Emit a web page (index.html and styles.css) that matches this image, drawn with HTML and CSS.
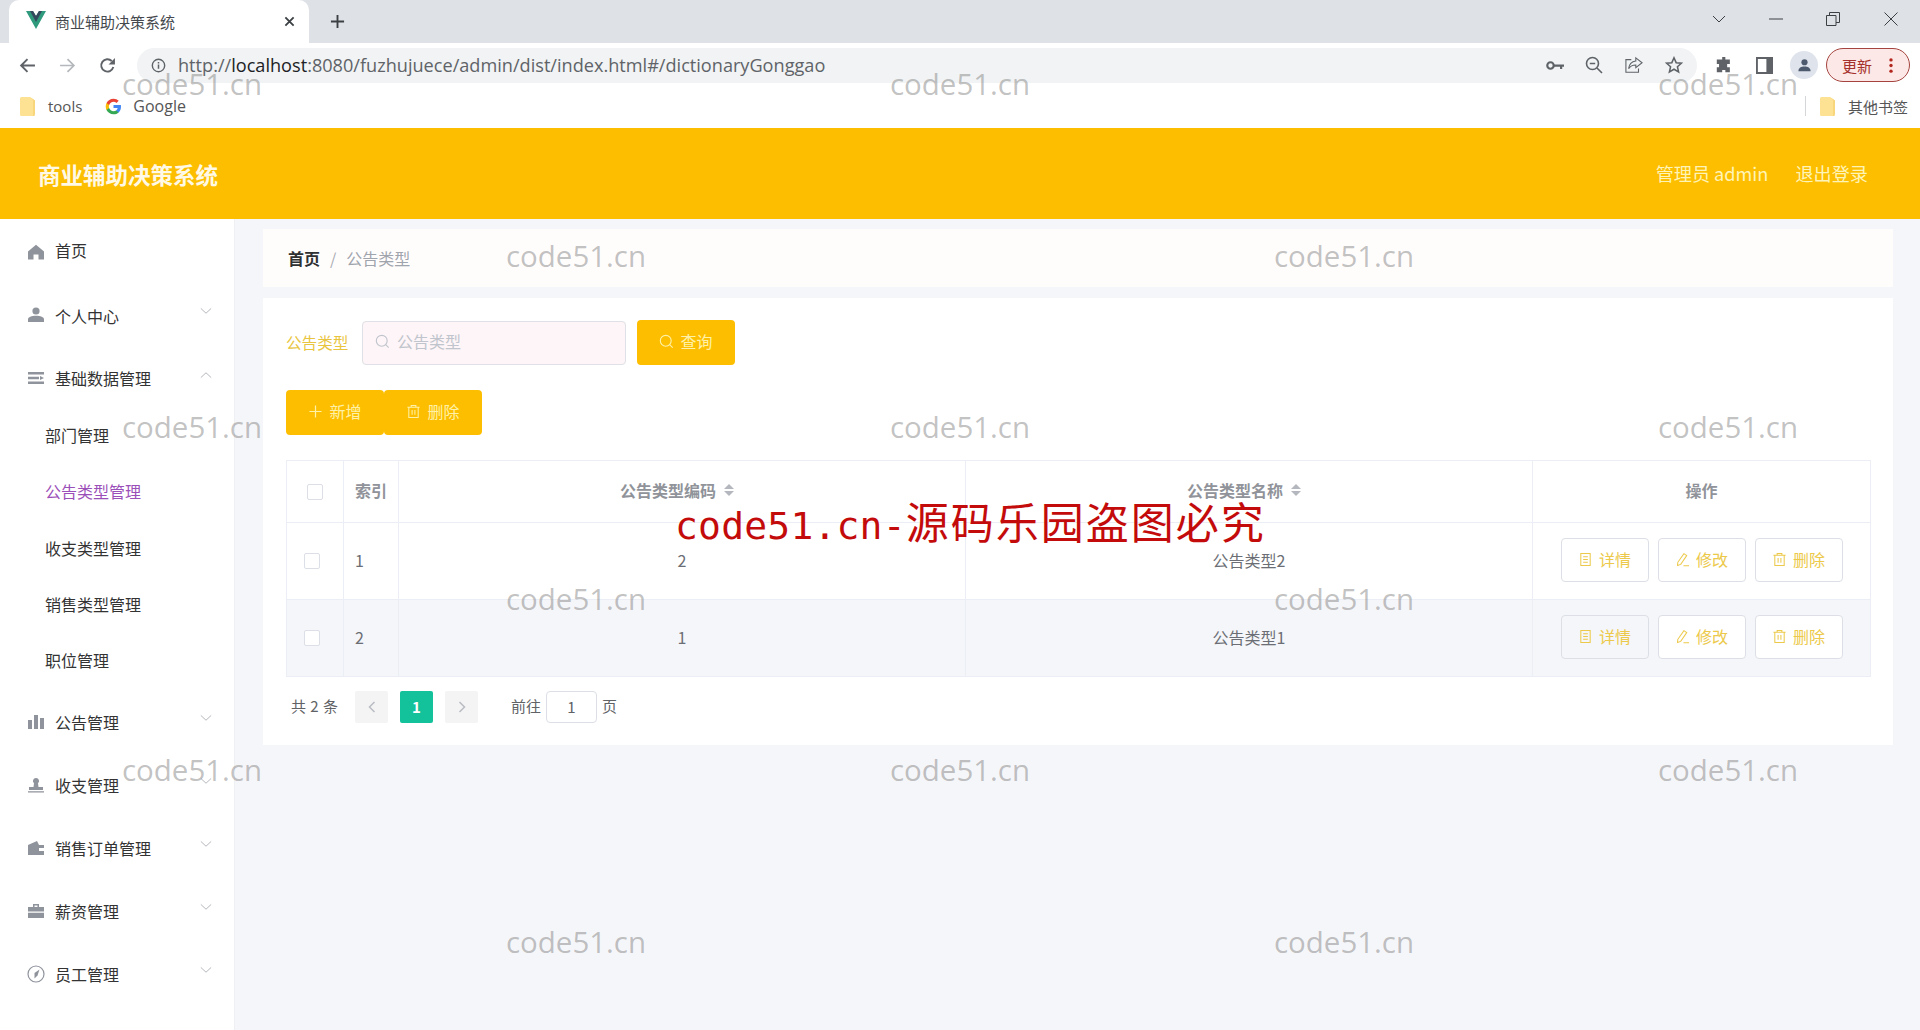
FILE: index.html
```html
<!DOCTYPE html>
<html lang="zh-CN">
  <head>
    <meta charset="UTF-8" />
    <meta name="viewport" content="width=device-width, initial-scale=1.0" />
    <title>商业辅助决策系统</title>
    <link rel="stylesheet" href="styles.css">
  </head>
  <body>
    <svg class="sprite" xmlns="http://www.w3.org/2000/svg">
      <symbol id="i-search" viewBox="0 0 16 16"><circle cx="7.2" cy="7.2" r="5.8" fill="none" stroke="currentColor" stroke-width="1.2"/><path d="M11.4 11.4l3.2 3.2" stroke="currentColor" stroke-width="1.2"/></symbol>
      <symbol id="i-trash" viewBox="0 0 16 16"><path d="M1.5 3.5h13M5.5 3.5V1.5h5v2M3 3.5v11h10v-11M6.5 6.5v5M9.5 6.5v5" fill="none" stroke="currentColor" stroke-width="1.1"/></symbol>
      <symbol id="i-doc" viewBox="0 0 16 16"><path d="M3 1.5h10v13H3zM5.5 5h5M5.5 8h5M5.5 11h5" fill="none" stroke="currentColor" stroke-width="1.1"/></symbol>
      <symbol id="i-edit" viewBox="0 0 16 16"><path d="M9.5 1.8l3 2-6.4 9.4-3.4 1.2.3-3.4zM9 14.6h6" fill="none" stroke="currentColor" stroke-width="1.1"/></symbol>
      <symbol id="i-down" viewBox="0 0 14 8"><path d="M1 1l6 5.6L13 1" fill="none" stroke="currentColor" stroke-width="1"/></symbol>
      <symbol id="i-folder" viewBox="0 0 16 19"><path d="M1.5 0h8.5l5 3.5v14a1.5 1.5 0 0 1-1.5 1.5h-12A1.5 1.5 0 0 1 0 17.500V1.500A1.500 1.500 0 0 1 1.500 0z" fill="#fde293"/><path d="M10 0l5 3.500V17l-1 2h-1V3z" fill="#f8d67c"/></symbol>
    </svg>

    <div class="browser">
      <div class="tabstrip">
        <div class="tab">
          <svg class="tab-icon" viewBox="0 0 20 20"><path d="M0 1h7l3 5 3-5h7L10 19z" fill="#2f9a7c"/><path d="M4 1h3l3 5 3-5h3L10 12z" fill="#35495e"/></svg>
          <span class="tab-title">商业辅助决策系统</span>
          <svg class="tab-close" viewBox="0 0 12 12"><path d="M1.500 1.500l9 9M10.500 1.500l-9 9" stroke="#3c4043" stroke-width="2"/></svg>
        </div>
        <svg class="tab-new" viewBox="0 0 16 16"><path d="M8 1v14M1 8h14" stroke="#3c4043" stroke-width="2"/></svg>
        <div class="window-controls">
          <svg viewBox="0 0 14 8" class="win-chevron"><path d="M1 1l6 6 6-6" fill="none" stroke="#3c4043"/></svg>
          <svg viewBox="0 0 14 14" class="win-min"><path d="M0 7h14" stroke="#3c4043"/></svg>
          <svg viewBox="0 0 14 14" class="win-max"><path d="M.5 3.500h9.500v10H.5zM3.500 3.500V.5h10v10H10" fill="none" stroke="#3c4043"/></svg>
          <svg viewBox="0 0 14 14" class="win-close"><path d="M.5.5l13 13M13.500.5l-13 13" stroke="#3c4043"/></svg>
        </div>
      </div>

      <div class="toolbar">
        <svg class="tool-icon back" viewBox="0 0 16 16"><path d="M15 8H2M8 2L2 8l6 6" fill="none" stroke="#5f6368" stroke-width="1.800"/></svg>
        <svg class="tool-icon forward" viewBox="0 0 16 16"><path d="M1 8h13M8 2l6 6-6 6" fill="none" stroke="#b4b7bb" stroke-width="1.600"/></svg>
        <svg class="tool-icon reload" viewBox="0 0 16 16"><path d="M13.500 9.500A5.800 5.800 0 1 1 12 3.800" fill="none" stroke="#5f6368" stroke-width="1.800"/><path d="M15 1v6H9z" fill="#5f6368"/></svg>
        <div class="omnibox">
          <svg class="omni-info" viewBox="0 0 16 16"><circle cx="8" cy="8" r="6.600" fill="none" stroke="#5f6368" stroke-width="1.500"/><path d="M8 7v4.500M8 4.200v1.600" stroke="#5f6368" stroke-width="1.600"/></svg>
          <span class="url">http://<b>localhost</b>:8080/fuzhujuece/admin/dist/index.html#/dictionaryGonggao</span>
          <svg class="omni-icon key" viewBox="0 0 20 12"><circle cx="5" cy="6" r="3.600" fill="none" stroke="#5f6368" stroke-width="2.400"/><path d="M8 4.800h12v2.600h-2v2.400h-2.400V7.400H8z" fill="#5f6368"/></svg>
          <svg class="omni-icon zoom" viewBox="0 0 18 18"><circle cx="7.500" cy="7.500" r="6" fill="none" stroke="#5f6368" stroke-width="1.600"/><path d="M4.800 7.500h5.400M12 12l5 5" stroke="#5f6368" stroke-width="1.600"/></svg>
          <svg class="omni-icon share" viewBox="0 0 20 18"><path d="M7 3H1v14h14v-4" fill="none" stroke="#5f6368" stroke-width="1.200"/><path d="M12 1l7 5.500-7 5.500V9C8 9 6 10 4 13c.6-5 3.500-8 8-8.500z" fill="none" stroke="#5f6368" stroke-width="1.200"/></svg>
          <svg class="omni-icon star" viewBox="0 0 20 20"><path d="M10 2l2.400 5.400 5.800.6-4.400 3.900 1.300 5.800L10 14.700l-5.100 3 1.300-5.800L1.800 8l5.800-.6z" fill="none" stroke="#5f6368" stroke-width="1.700"/></svg>
        </div>
        <svg class="tool-icon puzzle" viewBox="0 0 20 20"><path d="M8 1h3.500v3h5v5h-3v3.500h3V18h-5v-2.500H8V18H2v-5.500h2.500V9H2V4h6z" fill="#5f6368"/></svg>
        <svg class="tool-icon sidepanel" viewBox="0 0 18 18"><path d="M1 1h16v16H1z" fill="none" stroke="#5f6368" stroke-width="2"/><path d="M11 1h6v16h-6z" fill="#5f6368"/></svg>
        <span class="avatar"><svg viewBox="0 0 16 16"><circle cx="8" cy="4.500" r="3.300" fill="#4d5a6d"/><path d="M1.500 14c0-3.500 3-5 6.500-5s6.500 1.500 6.500 5z" fill="#4d5a6d"/></svg></span>
        <span class="update-btn">更新<svg class="update-dots" viewBox="0 0 4 16"><circle cx="2" cy="2" r="1.800"/><circle cx="2" cy="8" r="1.800"/><circle cx="2" cy="14" r="1.800"/></svg></span>
      </div>

      <div class="bookmarks">
        <svg class="bm-folder"><use href="#i-folder"/></svg>
        <span class="bm-text bm-tools">tools</span>
        <svg class="bm-google" viewBox="0 0 24 24">
          <path d="M22.560 12.250c0-.78-.07-1.530-.2-2.250H12v4.260h5.920c-.26 1.370-1.040 2.530-2.210 3.310v2.770h3.570c2.080-1.920 3.280-4.740 3.280-8.090z" fill="#4285f4"/>
          <path d="M12 23c2.970 0 5.460-.98 7.280-2.660l-3.570-2.770c-.98.66-2.230 1.060-3.710 1.060-2.860 0-5.290-1.930-6.160-4.530H2.180v2.840C3.990 20.530 7.700 23 12 23z" fill="#34a853"/>
          <path d="M5.840 14.090c-.22-.66-.35-1.360-.35-2.090s.13-1.430.35-2.090V7.070H2.180C1.430 8.550 1 10.220 1 12s.43 3.450 1.180 4.930l3.660-2.840z" fill="#fbbc05"/>
          <path d="M12 5.380c1.620 0 3.060.56 4.210 1.640l3.150-3.150C17.450 2.090 14.970 1 12 1 7.700 1 3.990 3.470 2.180 7.070l3.660 2.840c.87-2.600 3.300-4.530 6.160-4.530z" fill="#ea4335"/>
        </svg>
        <span class="bm-text bm-google-text">Google</span>
        <span class="bm-divider"></span>
        <svg class="bm-folder"><use href="#i-folder"/></svg>
        <span class="bm-text bm-other">其他书签</span>
      </div>
    </div>

    <header class="app-header">
      <h1 class="app-title">商业辅助决策系统</h1>
      <div class="app-user">
        <span>管理员 admin</span>
        <span>退出登录</span>
      </div>
    </header>

    <div class="layout">
      <aside class="sidebar">
        <div class="nav-item">
          <svg class="nav-icon" viewBox="0 0 16 16"><path d="M8 .8L16 7.500V15.500H10.500V10.500H5.500V15.500H0V7.500z"/></svg>
          <span>首页</span>
        </div>
        <div class="nav-item">
          <svg class="nav-icon" viewBox="0 0 16 16"><circle cx="8" cy="4" r="3.600"/><path d="M0 15v-2.500C0 10 3.500 8.800 8 8.800s8 1.200 8 3.700V15z"/></svg>
          <span>个人中心</span>
          <svg class="nav-arrow"><use href="#i-down"/></svg>
        </div>
        <div class="nav-item">
          <svg class="nav-icon" viewBox="0 0 16 16"><path d="M0 2h16v2.400H0zM0 6.800h11V9.200H0zM12 6l4 2-4 2zM0 11.600h16V14H0z"/></svg>
          <span>基础数据管理</span>
          <svg class="nav-arrow nav-arrow-up"><use href="#i-down"/></svg>
        </div>
        <div class="nav-sub">
          <a href="#">部门管理</a>
          <a href="#" class="active">公告类型管理</a>
          <a href="#">收支类型管理</a>
          <a href="#">销售类型管理</a>
          <a href="#">职位管理</a>
        </div>
        <div class="nav-item">
          <svg class="nav-icon" viewBox="0 0 16 16"><path d="M0 6h4v9H0zM6 1h4v14H6zM12 4h4v11h-4z"/></svg>
          <span>公告管理</span>
          <svg class="nav-arrow"><use href="#i-down"/></svg>
        </div>
        <div class="nav-item">
          <svg class="nav-icon" viewBox="0 0 16 16"><path d="M8 1a3 3 0 0 1 2 5.300L10.500 10H15v3H1v-3h4.500L6 6.300A3 3 0 0 1 8 1zM0 14.200h16v1.300H0z"/></svg>
          <span>收支管理</span>
          <svg class="nav-arrow"><use href="#i-down"/></svg>
        </div>
        <div class="nav-item">
          <svg class="nav-icon" viewBox="0 0 16 16"><path d="M0 5l9-4 2 4h5v3h-5v3h5v4H0z"/></svg>
          <span>销售订单管理</span>
          <svg class="nav-arrow"><use href="#i-down"/></svg>
        </div>
        <div class="nav-item">
          <svg class="nav-icon" viewBox="0 0 16 16"><path d="M5 1h6v3h5v4.500H0V4h5zM6.500 2.500V4h3V2.500zM0 9.800h16V15H0z"/></svg>
          <span>薪资管理</span>
          <svg class="nav-arrow"><use href="#i-down"/></svg>
        </div>
        <div class="nav-item">
          <svg class="nav-icon nav-icon-lg" viewBox="0 0 18 18"><circle cx="9" cy="9" r="8" fill="none" stroke="currentColor" stroke-width="1.200"/><path d="M12.500 4.500L10.500 10.500 7.500 13.500 7.500 8z"/></svg>
          <span>员工管理</span>
          <svg class="nav-arrow"><use href="#i-down"/></svg>
        </div>
      </aside>

      <main class="content">
        <div class="breadcrumb">
          <span class="crumb-home">首页</span>
          <span class="crumb-sep">/</span>
          <span class="crumb-current">公告类型</span>
        </div>

        <section class="panel">
          <form class="search-row">
            <label class="search-label">公告类型</label>
            <div class="search-input">
              <svg class="search-icon"><use href="#i-search"/></svg>
              <span>公告类型</span>
            </div>
            <button type="button" class="btn-fill btn-query">
              <svg class="btn-icon"><use href="#i-search"/></svg>查询
            </button>
          </form>

          <div class="action-row">
            <button type="button" class="btn-fill">
              <svg class="btn-icon" viewBox="0 0 16 16"><path d="M8 1.500v13M1.500 8h13" stroke="currentColor" stroke-width="1.300"/></svg>新增
            </button>
            <button type="button" class="btn-fill">
              <svg class="btn-icon"><use href="#i-trash"/></svg>删除
            </button>
          </div>

          <table class="data-table">
            <colgroup>
              <col class="col-check" />
              <col class="col-index" />
              <col class="col-code" />
              <col class="col-name" />
              <col />
            </colgroup>
            <thead>
              <tr>
                <th class="cell-check"><span class="checkbox"></span></th>
                <th class="cell-left">索引</th>
                <th><span class="th-sort">公告类型编码<i class="sort-carets"></i></span></th>
                <th><span class="th-sort">公告类型名称<i class="sort-carets"></i></span></th>
                <th>操作</th>
              </tr>
            </thead>
            <tbody>
              <tr>
                <td class="cell-check"><span class="checkbox"></span></td>
                <td class="cell-left">1</td>
                <td>2</td>
                <td>公告类型2</td>
                <td>
                  <div class="row-actions">
                    <button type="button" class="btn-line"><svg class="btn-icon"><use href="#i-doc"/></svg>详情</button>
                    <button type="button" class="btn-line"><svg class="btn-icon"><use href="#i-edit"/></svg>修改</button>
                    <button type="button" class="btn-line"><svg class="btn-icon"><use href="#i-trash"/></svg>删除</button>
                  </div>
                </td>
              </tr>
              <tr class="row-striped">
                <td class="cell-check"><span class="checkbox"></span></td>
                <td class="cell-left">2</td>
                <td>1</td>
                <td>公告类型1</td>
                <td>
                  <div class="row-actions">
                    <button type="button" class="btn-line btn-line-muted"><svg class="btn-icon"><use href="#i-doc"/></svg>详情</button>
                    <button type="button" class="btn-line"><svg class="btn-icon"><use href="#i-edit"/></svg>修改</button>
                    <button type="button" class="btn-line"><svg class="btn-icon"><use href="#i-trash"/></svg>删除</button>
                  </div>
                </td>
              </tr>
            </tbody>
          </table>

          <div class="pager">
            <span class="pager-total">共 2 条</span>
            <span class="pager-btn"><svg viewBox="0 0 8 12"><path d="M6.500 1L1.500 6l5 5" fill="none" stroke="currentColor" stroke-width="1.500"/></svg></span>
            <span class="pager-btn pager-current">1</span>
            <span class="pager-btn"><svg viewBox="0 0 8 12"><path d="M1.500 1l5 5-5 5" fill="none" stroke="currentColor" stroke-width="1.500"/></svg></span>
            <span class="pager-goto">前往</span>
            <span class="pager-input">1</span>
            <span>页</span>
          </div>
        </section>
      </main>
    </div>

    <!-- tiled site stamp over the whole window -->
    <div class="stamps">
      <span class="stamp c1">code51.cn</span>
      <span class="stamp c3">code51.cn</span>
      <span class="stamp c5">code51.cn</span>
      <span class="stamp c2">code51.cn</span>
      <span class="stamp c4">code51.cn</span>
      <span class="stamp c1">code51.cn</span>
      <span class="stamp c3">code51.cn</span>
      <span class="stamp c5">code51.cn</span>
      <span class="stamp c2">code51.cn</span>
      <span class="stamp c4">code51.cn</span>
      <span class="stamp c1">code51.cn</span>
      <span class="stamp c3">code51.cn</span>
      <span class="stamp c5">code51.cn</span>
      <span class="stamp c2">code51.cn</span>
      <span class="stamp c4">code51.cn</span>
    </div>
    <div class="stamp-red"><span>code51.cn-</span>源码乐园盗图必究</div>
  </body>
</html>
```

FILE: styles.css
```css
* {
  box-sizing: border-box;
}

html,
body {
  margin: 0;
  height: 1030px;
  overflow: hidden;
}

body {
  position: relative;
  display: flex;
  flex-direction: column;
  background: #f5f6f9;
  font-family: "Noto Sans CJK SC", "Noto Sans", sans-serif;
  font-size: 16px;
  color: #333;
}

.sprite {
  position: absolute;
  width: 0;
  height: 0;
}

svg {
  flex: none;
  display: block;
}

/* browser frame */
.browser {
  height: 128px;
  flex: none;
  background: #fff;
}

.tabstrip {
  height: 43px;
  display: flex;
  align-items: center;
  padding-left: 9px;
  background: #dee1e6;
}

.tab {
  width: 300px;
  height: 43px;
  display: flex;
  align-items: center;
  padding: 0 14px 0 17px;
  background: #fff;
  border-radius: 10px 10px 0 0;
}

.tab-icon {
  width: 20px;
  height: 20px;
  margin-top: -3px;
}

.tab-title {
  margin-left: 9px;
  font-size: 15px;
  color: #45494e;
}

.tab-close {
  width: 11px;
  height: 11px;
  margin-left: auto;
  margin-top: -1px;
}

.tab-new {
  width: 15px;
  height: 15px;
  margin-left: 21px;
}

.window-controls {
  margin-left: auto;
  display: flex;
  align-items: center;
  padding: 0 22px 6px 0;
}

.window-controls svg {
  width: 14px;
  height: 14px;
}

.window-controls .win-chevron {
  height: 8px;
}

.window-controls .win-min {
  margin-left: 43px;
}

.window-controls .win-max {
  margin-left: 43px;
}

.window-controls .win-close {
  margin-left: 44px;
}

.toolbar {
  height: 41px;
  display: flex;
  align-items: center;
  padding-top: 3px;
  padding-left: 19px;
}

.tool-icon {
  width: 17px;
  height: 17px;
}

.forward {
  margin-left: 23px;
}

.reload {
  margin-left: 23px;
}

.omnibox {
  width: 1560px;
  height: 35px;
  margin-left: 21px;
  display: flex;
  align-items: center;
  padding-left: 14px;
  background: #f1f3f4;
  border-radius: 18px;
}

.omni-info {
  width: 15px;
  height: 15px;
}

.url {
  margin-left: 12px;
  font-family: "Open Sans", sans-serif;
  font-size: 18.14px;
  color: #5f6368;
  white-space: nowrap;
}

.url b {
  font-weight: 400;
  color: #202124;
}

.omni-icon {
  width: 18px;
  height: 18px;
}

.key {
  margin-left: auto;
  height: 11px;
}

.zoom {
  margin-left: 21px;
}

.share {
  margin-left: 22px;
}

.star {
  margin-left: 22px;
  margin-right: 14px;
}

.puzzle {
  width: 18px;
  height: 18px;
  margin-left: 18px;
}

.sidepanel {
  margin-left: 23px;
}

.avatar {
  width: 28px;
  height: 28px;
  margin-left: 17px;
  display: flex;
  align-items: center;
  justify-content: center;
  background: #dfe3eb;
  border-radius: 50%;
}

.avatar svg {
  width: 15px;
  height: 15px;
}

.update-btn {
  width: 84px;
  height: 34px;
  margin-left: 8px;
  display: flex;
  align-items: center;
  padding-left: 15px;
  background: #fce8e6;
  border: 1px solid #a5443f;
  border-radius: 17px;
  font-size: 15px;
  color: #a5312c;
}

.update-dots {
  width: 4px;
  height: 15px;
  margin-left: 17px;
  fill: #b3261e;
}

.bookmarks {
  height: 44px;
  display: flex;
  align-items: center;
  padding-left: 20px;
}

.bm-folder {
  width: 16px;
  height: 19px;
}

.bm-text {
  font-family: "Open Sans", "Noto Sans CJK SC", sans-serif;
  font-size: 15px;
  color: #555;
}

.bm-tools {
  margin-left: 12px;
}

.bm-google {
  width: 17px;
  height: 17px;
  margin: 0 11px 0 23px;
}

.bm-google-text {
  font-size: 16px;
}

.bm-divider {
  width: 1px;
  height: 20px;
  margin-left: auto;
  margin-right: 14px;
  background: #d5d6d8;
}

.bm-other {
  margin: 0 12px 0 12px;
  font-family: "Noto Sans CJK SC", sans-serif;
  font-size: 15px;
}

/* app header */
.app-header {
  height: 91px;
  flex: none;
  display: flex;
  align-items: center;
  justify-content: space-between;
  padding: 0 52px 0 38px;
  background: #fdbe00;
}

.app-title {
  margin: 0;
  font-size: 22.5px;
  font-weight: 700;
  color: #fff9e6;
}

.app-user {
  display: flex;
  gap: 27px;
  margin-top: -2px;
  font-size: 18.15px;
  color: #fff4b8;
}

/* page body */
.layout {
  flex: 1;
  display: flex;
  min-height: 0;
}

.sidebar {
  width: 235px;
  flex: none;
  padding-top: 1px;
  background: #fff;
  border-right: 1px solid #eef0f3;
}

.nav-item {
  height: 63px;
  display: flex;
  align-items: center;
  padding: 0 22px 0 28px;
  color: #333;
}

.nav-item:nth-child(1) span {
  margin-bottom: 3px;
}

.nav-item:nth-child(2) span {
  margin-top: 2px;
}

.nav-icon {
  width: 16px;
  height: 16px;
  margin-right: 11px;
  fill: #8f939c;
  color: #8f939c;
}

.nav-icon-lg {
  width: 18px;
  height: 18px;
  margin-left: -1px;
  margin-right: 10px;
}

.nav-arrow {
  width: 12px;
  height: 8px;
  margin-left: auto;
  margin-bottom: 8px;
  color: #a9acb2;
}

.nav-arrow-up {
  margin-bottom: 5px;
  transform: rotate(180deg);
}

.nav-sub {
  margin: -2px 0 2px;
}

.nav-sub a {
  height: 56.3px;
  display: flex;
  align-items: center;
  padding-left: 45px;
  color: #333;
  text-decoration: none;
}

.nav-sub a.active {
  color: #9b4fb8;
}

.content {
  flex: 1;
  min-width: 0;
  padding: 10px 27px 0 28px;
}

.breadcrumb {
  height: 58px;
  display: flex;
  align-items: center;
  padding: 0 0 1px 25px;
  background: #fffdfc;
}

.crumb-home {
  font-weight: 700;
  color: #303133;
}

.crumb-sep {
  margin: 0 10px;
  color: #a9acb3;
}

.crumb-current {
  color: #a0a4ac;
}

.panel {
  height: 447px;
  margin-top: 11px;
  padding: 22px 23px 0;
  background: #fff;
}

.search-row {
  display: flex;
  align-items: center;
  margin: 0;
}

.search-label {
  width: 76px;
  padding-bottom: 2px;
  font-size: 15.6px;
  color: #e9c53f;
}

.search-input {
  width: 264px;
  height: 44px;
  display: flex;
  align-items: center;
  padding: 0 0 3px 12px;
  background: #fdf5f7;
  border: 1px solid #dfe1e6;
  border-radius: 4px;
  color: #c0c4cc;
}

.search-icon {
  width: 15px;
  height: 15px;
  margin-right: 7px;
}

.btn-fill {
  width: 98px;
  height: 45px;
  display: flex;
  align-items: center;
  justify-content: center;
  padding: 0 0 3px;
  background: #fdbe00;
  border: 0;
  border-radius: 4px;
  font-family: inherit;
  font-size: 16px;
  color: #fff2a8;
}

.btn-icon {
  width: 15px;
  height: 15px;
  margin-right: 6px;
}

.btn-query {
  margin-left: 11px;
}

.action-row {
  display: flex;
  margin-top: 25px;
}

.data-table {
  width: 1585px;
  margin-top: 25px;
  table-layout: fixed;
  border-collapse: collapse;
  border: 1px solid #ebeef5;
  font-size: 16px;
  color: #6b6e74;
}

.col-check {
  width: 57px;
}

.col-index {
  width: 55px;
}

.col-code,
.col-name {
  width: 567px;
}

.data-table th,
.data-table td {
  text-align: center;
  border: 1px solid #ebeef5;
}

.data-table th {
  height: 62px;
  padding: 0 0 3px;
  font-weight: 700;
  color: #909399;
}

.data-table td {
  height: 77px;
  padding: 0 0 2px;
}

.row-striped td {
  background: #f5f6f9;
}

.data-table .cell-left {
  padding-left: 11px;
  text-align: left;
}

.checkbox {
  width: 16px;
  height: 16px;
  display: block;
  background: #fff;
  border: 1px solid #dcdfe6;
  border-radius: 2px;
}

td .checkbox {
  margin: 2px 0 0 17px;
}

th .checkbox {
  margin: 3px 0 0 20px;
}

.th-sort {
  display: inline-flex;
  align-items: center;
  margin: -6px 10px 0 0;
}

.sort-carets {
  position: relative;
  width: 10px;
  height: 14px;
  margin-left: 8px;
}

.sort-carets::before,
.sort-carets::after {
  content: "";
  position: absolute;
  left: 0;
  border: 5px solid transparent;
  border-top-width: 0;
  border-bottom-color: #b4b7bd;
}

.sort-carets::before {
  top: 1px;
}

.sort-carets::after {
  bottom: 1px;
  transform: rotate(180deg);
}

.row-actions {
  display: flex;
  justify-content: center;
  gap: 9px;
}

.btn-line {
  width: 88px;
  height: 44px;
  display: flex;
  align-items: center;
  justify-content: center;
  padding: 0 0 2px;
  background: #fff;
  border: 1px solid #dcdfe6;
  border-radius: 4px;
  font-family: inherit;
  font-size: 16px;
  color: #ecc94a;
}

.btn-line-muted {
  background: #f5f6f9;
}

.pager {
  display: flex;
  align-items: center;
  margin-top: 14px;
  padding-left: 5px;
  font-size: 15px;
  line-height: 30px;
  color: #606266;
}

.pager > span:not(.pager-btn):not(.pager-input) {
  margin-top: -2px;
}

.pager-total {
  width: 64px;
  word-spacing: 1px;
}

.pager-btn {
  width: 33px;
  height: 32px;
  display: flex;
  align-items: center;
  justify-content: center;
  margin-right: 12px;
  background: #f4f4f5;
  border-radius: 2px;
  color: #b9bcc2;
}

.pager-btn svg {
  width: 8px;
  height: 12px;
}

.pager-current {
  background: #13c29a;
  color: #fff;
  font-weight: 700;
}

.pager-goto {
  margin-left: 21px;
}

.pager-input {
  width: 51px;
  height: 32px;
  display: flex;
  align-items: center;
  justify-content: center;
  margin: 0 5px;
  background: #fff;
  border: 1px solid #dcdfe6;
  border-radius: 4px;
}

/* overlays */
.stamps {
  position: absolute;
  top: -2px;
  left: 0;
  width: 1920px;
  display: grid;
  grid-template-columns: repeat(5, 384px);
  grid-auto-rows: 171.5px;
  align-items: center;
  pointer-events: none;
}

.stamp {
  text-align: center;
  font-family: "Open Sans", sans-serif;
  font-size: 29.5px;
  line-height: 1;
  color: rgba(120, 120, 120, 0.45);
}

.c1 { grid-column: 1; }
.c2 { grid-column: 2; }
.c3 { grid-column: 3; }
.c4 { grid-column: 4; }
.c5 { grid-column: 5; }

.stamp-red {
  position: absolute;
  top: 493px;
  left: 675px;
  font-size: 43px;
  line-height: 54px;
  letter-spacing: 2px;
  color: #c40b0b;
  white-space: nowrap;
  pointer-events: none;
}

.stamp-red span {
  font-family: "DejaVu Sans Mono", monospace;
  font-size: 38px;
  letter-spacing: 0.2px;
}
```
